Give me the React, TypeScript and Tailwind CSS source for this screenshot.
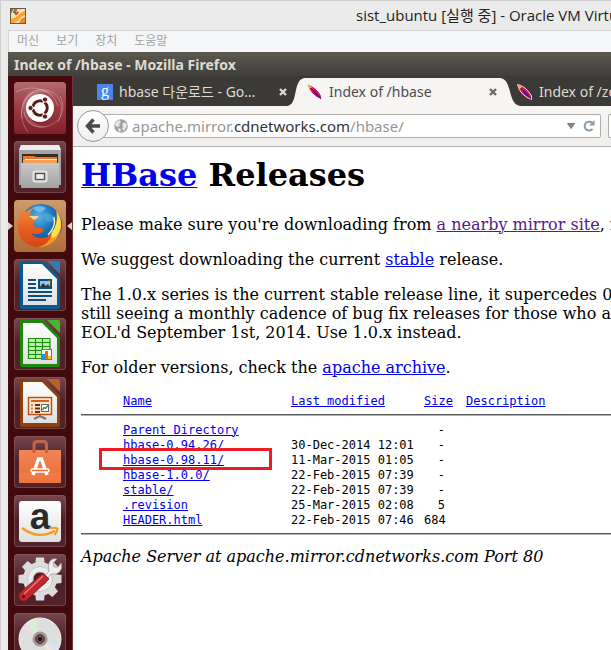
import type { ReactNode } from "react"

const link = "text-[#0000ee] underline decoration-1"

const files = [
  { name: "Parent Directory", date: "", size: "-" },
  { name: "hbase-0.94.26/", date: "30-Dec-2014 12:01", size: "-" },
  { name: "hbase-0.98.11/", date: "11-Mar-2015 01:05", size: "-", marked: true },
  { name: "hbase-1.0.0/", date: "22-Feb-2015 07:39", size: "-" },
  { name: "stable/", date: "22-Feb-2015 07:39", size: "-" },
  { name: ".revision", date: "25-Mar-2015 02:08", size: "5" },
  { name: "HEADER.html", date: "22-Feb-2015 07:46", size: "684" },
]

const VmIcon = () => (
  <svg viewBox="0 0 16 16" className="size-4 shrink-0" aria-hidden="true">
    <rect x="0.5" y="0.5" width="15" height="15" fill="#f6dfb8" stroke="#6e5540" />
    <path d="M1 15V11L6 9L9 5L15 3V7L11 9L8 13L4 15Z" fill="#f6a62b" />
    <path d="M9 15L11 11L15 9V15Z" fill="#f08a1c" />
    <path d="M4 5Q6 9 8 6L9 4L6 3Z" fill="#e8541c" />
    <path d="M1 1H7V4H1Z" fill="#c9c9c9" />
    <path d="M1 2H3M4 2H7M1 4H2M3 4H6" stroke="#2c2c2c" />
    <path d="M7 8L12 3L14 2" stroke="#fff3d8" fill="none" />
  </svg>
)

const Feather = () => (
  <svg viewBox="0 0 16 16" className="size-4 shrink-0" aria-hidden="true">
    <path
      d="M0.5 0.5L4 1.5L8 4L12 8L14.5 12L14.5 15.5L10 13.5L5 9.5L2 5Z"
      fill="#dc1464"
      stroke="#ffffff"
      strokeWidth="0.8"
    />
    <path d="M0.5 0.5L4 1.5L4.5 4L2 4.5Z" fill="#e8b23a" />
    <path d="M5 5L9 8L12.5 12L13 14L8 10.5Z" fill="#4b1a8c" />
    <path d="M4 4L14 15" stroke="#2a1470" strokeWidth="0.8" />
  </svg>
)

const CloseMark = ({ color }: { color: string }) => (
  <svg viewBox="0 0 8 8" className="size-2" aria-hidden="true">
    <path d="M1 1L7 7M7 1L1 7" stroke={color} strokeWidth="2.4" />
  </svg>
)

const UbuntuIcon = () => (
  <>
    <rect width="52" height="52" rx="3" fill="url(#dash)" />
    <g fill="none" stroke="#fff" strokeOpacity="0.28">
      <path d="M8 36C4 16 22 2 38 10C48 16 50 28 44 40" />
      <path d="M2 10C18 2 38 6 44 24" />
      <path d="M14 50C4 38 6 18 20 10" />
      <path d="M10 30C12 46 32 50 44 38C50 32 50 20 46 14" />
    </g>
    <path
      d="M9 24C8 8 30 0 42 16C32 6 16 10 14 24C12 38 24 46 36 44C20 50 8 40 9 24Z"
      fill="#fff"
      fillOpacity="0.16"
    />
    <circle cx="26" cy="27" r="14" fill="#5b1219" opacity="0.5" />
    <circle cx="26" cy="26" r="14" fill="#fff" />
    <circle cx="26" cy="26" r="7.2" fill="none" stroke="#5c1b1b" strokeWidth="3" />
    <path d="M26 26L14 26M26 26L32 16M26 26L32 36" stroke="#fff" strokeWidth="1.6" />
    <circle cx="26" cy="26" r="5.4" fill="#fff" />
    <g fill="#5c1b1b" stroke="#fff" strokeWidth="0.9">
      <circle cx="16.5" cy="26" r="2.6" />
      <circle cx="31" cy="17.5" r="2.6" />
      <circle cx="31" cy="34.5" r="2.6" />
    </g>
  </>
)

const FilesIcon = () => (
  <>
    <path d="M7 4H45L47 9V44H5V9Z" fill="#a6a6a6" />
    <path d="M7 4H45L47 9H5Z" fill="#ececec" />
    <rect x="8" y="13" width="36" height="10" fill="#3b2b28" />
    <path d="M9 15H20L22 16H43V23H9Z" fill="#e8762c" />
    <path d="M9 19H43V23H9Z" fill="#f5a052" />
    <path d="M11 18.5H43" stroke="#fff1dc" />
    <rect x="7" y="22" width="38" height="25" fill="url(#drawer)" />
    <rect x="19" y="30" width="14" height="11" rx="2" fill="#d9d9d9" stroke="#ededed" />
    <rect x="21.5" y="32.5" width="9" height="6" fill="#f1f1f1" stroke="#565656" strokeWidth="1.4" />
  </>
)

const FirefoxIcon = () => (
  <>
    <rect width="52" height="52" rx="3" fill="url(#foxTile)" />
    <circle cx="27" cy="25" r="21" fill="url(#globe)" />
    <path d="M18 8Q25 4 32 8Q28 13 24 12Z" fill="#7cc5ee" opacity="0.8" />
    <path d="M30 14Q38 12 41 20Q36 24 31 20Z" fill="#57addd" opacity="0.6" />
    <path
      d="M42 10C50 20 49 36 38 43C29 49 14 49 8 38C18 42 30 42 37 34C42 28 44 20 42 10Z"
      fill="#f59a1d"
    />
    <path d="M43 12C49 21 48 31 41 37C38 39 36 37 38 32C42 27 44 20 43 12Z" fill="#ffe24a" />
    <path d="M40 17C42 25 38 31 34 35" stroke="#fff8b8" strokeWidth="1.4" fill="none" />
    <path
      d="M6 16Q7 12 10 9L12 12Q15 9 19 8Q16 11 16 15L24 16Q25 19 20 21L19 25Q22 28 27 28Q30 29 29 32Q23 36 17 33Q20 38 28 38Q34 38 38 34Q35 45 24 47C12 47 4 38 4 27Q4 20 6 16Z"
      fill="url(#fox)"
    />
    <path d="M15 16L24 16Q25 18 20 20Z" fill="#f8d2a0" />
  </>
)

const WriterIcon = () => (
  <>
    <path d="M6 4Q6 2 8 2H29L46 19V48Q46 50 44 50H8Q6 50 6 48Z" fill="#075a92" />
    <path d="M33 2H44Q46 2 46 4V15Z" fill="#2f7fb3" />
    <path d="M9 5H28L43 20V46H9Z" fill="url(#paper)" />
    <path
      d="M14 21H22M14 25H22M14 29H22M14 33H38M14 37H38M14 41H32"
      stroke="#0b4f80"
      strokeWidth="2"
    />
    <rect x="25" y="21" width="12" height="8" fill="#8cc7ec" stroke="#0b4f80" strokeWidth="2" />
    <path d="M26 28L29 24L32 27L34 25L36 28Z" fill="#333" />
    <circle cx="35" cy="23" r="1.5" fill="#e0c04a" />
  </>
)

const CalcIcon = () => (
  <>
    <path d="M6 4Q6 2 8 2H29L46 19V47Q46 49 44 49H8Q6 49 6 47Z" fill="#1b8a0d" />
    <path d="M33 2H44Q46 2 46 4V15Z" fill="#46b830" />
    <path d="M9 5H28L43 20V46H9Z" fill="url(#paper)" />
    <rect x="14" y="20" width="22" height="20" fill="#b9f2a4" />
    <path
      d="M14 20.5H36V40.5H14.5V20M14 24.5H36M14 28.5H36M14 32.5H36M14 36.5H36M21.5 20V40M28.5 20V40"
      stroke="#1f8c12"
      strokeWidth="1.2"
      fill="none"
    />
    <rect x="27.5" y="31.5" width="10" height="10" fill="#fff" stroke="#777" />
    <path d="M28 36H31V41H28Z" fill="#1d99e0" />
    <path d="M31 33H34V41H31Z" fill="#ee6a12" />
    <path d="M34 38H37V41H34Z" fill="#f5b92d" />
  </>
)

const ImpressIcon = () => (
  <>
    <path d="M6 4Q6 2 8 2H29L46 19V48Q46 50 44 50H8Q6 50 6 48Z" fill="#8d400f" />
    <path d="M33 2H44Q46 2 46 4V15Z" fill="#b5622d" />
    <path d="M9 5H28L43 20V46H9Z" fill="url(#paper)" />
    <path d="M26 38V39L20 42M26 39L32 42" stroke="#777" strokeWidth="2" fill="none" />
    <rect x="14.5" y="20.5" width="23" height="17" fill="#fbe4d2" stroke="#b94a10" strokeWidth="1.4" />
    <path d="M17 24H35" stroke="#d2601c" strokeWidth="2" />
    <path d="M17 28H19M17 31.5H19M17 35H19" stroke="#e0803e" strokeWidth="2" />
    <path d="M21 28H26M21 31.5H26M21 35H26" stroke="#6f2c08" strokeWidth="2" />
    <rect x="27.5" y="27.5" width="7" height="7" fill="#fff" stroke="#666" />
    <path d="M28.5 33L30 30.5L31.5 31.5L34 28.5" stroke="#29931c" strokeWidth="1.3" fill="none" />
  </>
)

const SoftwareIcon = () => (
  <>
    <path
      d="M20 17V9Q20 5.5 23.5 5.5H29Q32.5 5.5 32.5 9V17"
      stroke="#c46447"
      strokeWidth="3"
      fill="none"
    />
    <path d="M5 14H47V47H5Z" fill="url(#bag)" />
    <path d="M5 37H47V47H5Z" fill="#fff" fillOpacity="0.07" />
    <path d="M20 14V17M32.5 14V17" stroke="#c9603a" strokeWidth="3" />
    <path d="M19 39L24.5 23H27.5L33 39" stroke="#fff" strokeWidth="3.4" fill="none" />
    <rect x="17" y="33" width="18" height="3" rx="1.5" fill="#ef6b33" stroke="#fff" strokeWidth="1.5" />
  </>
)

const AmazonIcon = () => (
  <>
    <rect x="5" y="6" width="42" height="41" rx="3" fill="url(#paper)" />
    <text
      x="26"
      y="34"
      textAnchor="middle"
      fill="#2b2b2b"
      className="font-['Liberation_Sans',sans-serif] text-[37px] font-bold"
    >
      a
    </text>
    <path d="M8 33Q24 45 41 36" stroke="#f79a1c" strokeWidth="2.4" fill="none" />
    <path d="M35 33.5Q41 32 43.5 33.5Q43.5 37 40.5 40" stroke="#f79a1c" strokeWidth="2" fill="none" />
  </>
)

const teeth = [0, 45, 90, 135, 180, 225, 270, 315]

const SettingsIcon = () => (
  <>
    <g fill="#dcdcdc">
      {teeth.map((deg) => (
        <path key={deg} d="M21 12L22 3.5H30L31 12Z" transform={`rotate(${deg} 26 25)`} />
      ))}
      <circle cx="26" cy="25" r="17" />
    </g>
    <circle cx="26" cy="25" r="12.5" fill="#ececec" stroke="#c9c9c9" />
    <circle cx="26" cy="25" r="7" fill="#4a1c22" stroke="#bcbcbc" />
    <path
      d="M28 25L35 17Q33 10 37 6Q39 4 43 5L39 9L40 13L44 13L47 9Q49 16 44 19Q41 21 37 20L31 28Z"
      fill="#efefef"
      stroke="#9a9a9a"
      strokeWidth="0.8"
    />
    <path
      d="M29 19L35 25L14 45Q10 49 6 46Q3 42 6 38.5Z"
      fill="#c0272d"
      stroke="#7d1216"
      strokeWidth="0.8"
    />
    <path d="M29 22L10 40" stroke="#e8777a" strokeWidth="1.5" />
    <circle cx="9.5" cy="42.5" r="1.5" fill="#4f0d10" />
  </>
)

const DiscIcon = () => (
  <>
    <circle cx="26" cy="26" r="21" fill="#dedede" stroke="#f4f4f4" />
    <path d="M26 26L12 11Q17 6 22 5.5Z" fill="#d8efd4" />
    <path d="M26 26L8 15L12 11Z" fill="#f2d9ec" />
    <path d="M26 26L46 33L42 39Z" fill="#d4e6f2" />
    <path d="M26 26L42 39L36 44Z" fill="#f3e3cf" />
    <circle cx="26" cy="26" r="7.5" fill="#a39797" />
    <circle cx="26" cy="26" r="4.5" fill="#6e4a4c" stroke="#54383a" />
    <circle cx="26" cy="26" r="2" fill="#1f0b0c" />
  </>
)

const Gradients = () => (
  <svg className="absolute size-0" aria-hidden="true">
    <defs>
      <linearGradient id="dash" x2="0" y2="1">
        <stop offset="0" stopColor="#b46a6e" />
        <stop offset="0.5" stopColor="#9a3a40" />
        <stop offset="1" stopColor="#85202a" />
      </linearGradient>
      <linearGradient id="drawer" x2="0" y2="1">
        <stop offset="0" stopColor="#c9c9c9" />
        <stop offset="1" stopColor="#a2a2a2" />
      </linearGradient>
      <linearGradient id="foxTile" x2="0" y2="1">
        <stop offset="0" stopColor="#cf9a6c" />
        <stop offset="1" stopColor="#ae6d38" />
      </linearGradient>
      <radialGradient id="globe" cx="0.45" cy="0.3" r="0.7">
        <stop offset="0" stopColor="#5cb5e6" />
        <stop offset="0.5" stopColor="#1c74b8" />
        <stop offset="1" stopColor="#143f86" />
      </radialGradient>
      <linearGradient id="fox" x2="0" y2="1">
        <stop offset="0" stopColor="#f08a35" />
        <stop offset="0.6" stopColor="#e55a1e" />
        <stop offset="1" stopColor="#d1461a" />
      </linearGradient>
      <linearGradient id="paper" x2="0" y2="1">
        <stop offset="0" stopColor="#ffffff" />
        <stop offset="1" stopColor="#dfdfdf" />
      </linearGradient>
      <linearGradient id="bag" x2="0" y2="1">
        <stop offset="0" stopColor="#f0855a" />
        <stop offset="1" stopColor="#ee6a30" />
      </linearGradient>
    </defs>
  </svg>
)

const launchers: { label: string; icon: ReactNode; active?: boolean }[] = [
  { label: "Dash", icon: <UbuntuIcon /> },
  { label: "Files", icon: <FilesIcon /> },
  { label: "Firefox", icon: <FirefoxIcon />, active: true },
  { label: "Writer", icon: <WriterIcon /> },
  { label: "Calc", icon: <CalcIcon /> },
  { label: "Impress", icon: <ImpressIcon /> },
  { label: "Software Center", icon: <SoftwareIcon /> },
  { label: "Amazon", icon: <AmazonIcon /> },
  { label: "System Settings", icon: <SettingsIcon /> },
  { label: "Disc", icon: <DiscIcon /> },
]

const Launcher = () => (
  <nav className="flex w-[65px] shrink-0 flex-col items-center gap-[7px] overflow-hidden border-r border-[#7a3038] bg-[#420a0c] pt-[6px]">
    <Gradients />
    {launchers.map(({ label, icon, active }) => (
      <div key={label} className="relative flex w-full shrink-0 justify-center">
        <button
          aria-label={label}
          className="size-[52px] overflow-hidden rounded-[4px] bg-linear-to-b from-[#76474f] via-[#4f1e26] to-[#53232b] ring-1 ring-[#8a5a60]/60 ring-inset"
        >
          <svg viewBox="0 0 52 52" className="size-full">
            {icon}
          </svg>
        </button>
        {active && (
          <>
            <svg viewBox="0 0 5 8" className="absolute top-[22px] left-0 h-2 w-[5px]" aria-hidden="true">
              <path d="M0 0L5 4L0 8Z" fill="#d9d2d0" />
            </svg>
            <svg viewBox="0 0 5 8" className="absolute top-[22px] right-0 h-2 w-[5px]" aria-hidden="true">
              <path d="M5 0L0 4L5 8Z" fill="#d9d2d0" />
            </svg>
          </>
        )}
      </div>
    ))}
  </nav>
)

const TabBar = () => (
  <div className="flex h-[30px] shrink-0 items-end overflow-hidden bg-[#3b3a36] text-[14px] leading-5 whitespace-nowrap text-[#dfdbd2]">
    <div className="flex h-7 w-[214px] shrink-0 items-center gap-[6px] pl-6">
      <svg viewBox="0 0 16 16" className="size-4 shrink-0" aria-hidden="true">
        <rect width="16" height="16" rx="1" fill="#4a86ee" />
        <text
          x="8"
          y="12"
          textAnchor="middle"
          fill="#fff"
          className="font-['Liberation_Serif',serif] text-[16px]"
        >
          g
        </text>
      </svg>
      <span>hbase 다운로드 - Go…</span>
      <button aria-label="Close tab" className="ml-auto">
        <CloseMark color="#dfdbd2" />
      </button>
    </div>
    <div className="flex h-7 shrink-0 items-stretch text-[#4c4c4c]">
      <svg viewBox="0 0 20 28" className="h-7 w-5" aria-hidden="true">
        <path d="M0 28C12 27 5 1 18 0H20V28Z" fill="#f6f5f4" />
      </svg>
      <div className="flex w-[190px] items-center gap-[6px] bg-[#f6f5f4]">
        <Feather />
        <span>Index of /hbase</span>
        <button aria-label="Close tab" className="ml-auto">
          <CloseMark color="#6a6a68" />
        </button>
      </div>
      <svg viewBox="0 0 24 28" className="h-7 w-6" aria-hidden="true">
        <path d="M24 28C10 27 16 1 3 0H0V28Z" fill="#f6f5f4" />
      </svg>
    </div>
    <div className="-ml-1 flex h-7 shrink-0 items-center gap-[6px]">
      <Feather />
      <span>Index of /zookeeper</span>
    </div>
  </div>
)

const NavBar = () => (
  <div className="flex h-[41px] shrink-0 items-center overflow-hidden border-b border-[#b4b2a8] bg-linear-to-b from-[#f6f5f4] to-[#f0efee] pl-1">
    <button
      aria-label="Back"
      className="z-10 flex size-8 shrink-0 items-center justify-center rounded-full border border-[#8f9aa6] bg-linear-to-b from-white to-[#efefef]"
    >
      <svg viewBox="0 0 16 16" className="size-4" aria-hidden="true">
        <path d="M8.5 1.5L2.5 8L8.5 14.5M3 8H15" stroke="#4a4a4a" strokeWidth="3.4" fill="none" />
      </svg>
    </button>
    <div className="-ml-3 flex h-6 min-w-0 flex-1 items-center gap-1 rounded-[2px] border border-[#b0aea4] bg-white pr-[5px] pl-4 text-[15px] leading-5 whitespace-nowrap text-[#979797]">
      <svg viewBox="0 0 14 14" className="size-[14px] shrink-0" aria-hidden="true">
        <circle cx="7" cy="7" r="6.8" fill="#a0a0a0" />
        <path
          d="M2 3L5 1L7 3L5 5L6 7L3 8L1 6ZM8 5L11 3L13 6L12 9L10 12L8 10L9 8ZM4 10L6 9L7 12L5 13Z"
          fill="#e6e6e6"
        />
      </svg>
      <span className="flex-1">
        apache.mirror.<span className="text-[#333]">cdnetworks.com</span>/hbase/
      </span>
      <button aria-label="History" className="px-1">
        <svg viewBox="0 0 8 6" className="h-[6px] w-2" aria-hidden="true">
          <path d="M0.5 0.5H7.5L4 5.5Z" fill="#8a8a8a" stroke="#777" />
        </svg>
      </button>
      <button aria-label="Reload">
        <svg viewBox="0 0 12 12" className="size-3" aria-hidden="true">
          <path d="M9.5 8.8A4.4 4.4 0 1 1 9 2.8" stroke="#8d9aa8" strokeWidth="2" fill="none" />
          <path d="M11.5 0V5.5H6Z" fill="#8d9aa8" />
        </svg>
      </button>
    </div>
    <div className="ml-[7px] h-6 w-[3px] shrink-0 rounded-l-[2px] border border-r-0 border-[#b0aea4] bg-white" />
  </div>
)

const Listing = () => (
  <table className="mt-[17px] w-full table-fixed border-collapse font-['DejaVu_Sans_Mono',monospace] text-[12px] leading-[15px] whitespace-nowrap">
    <thead>
      <tr className="text-left">
        <th className="w-[210px] p-0 pl-[42px] font-normal">
          <a href="#name" className={link}>Name</a>
        </th>
        <th className="w-[133px] p-0 font-normal">
          <a href="#modified" className={link}>Last modified</a>
        </th>
        <th className="w-[42px] p-0 font-normal">
          <a href="#size" className={link}>Size</a>
        </th>
        <th className="p-0 font-normal">
          <a href="#description" className={link}>Description</a>
        </th>
      </tr>
    </thead>
    <tbody>
      <tr>
        <td colSpan={4} className="p-0">
          <hr className="mt-[5px] mb-[7px] h-[2px] border-t border-b border-t-[#5a5a5a] border-b-[#b0b0b0]" />
        </td>
      </tr>
      {files.map((f) => (
        <tr key={f.name}>
          <td className="relative p-0 pl-[42px]">
            <a href="#file" className={link}>{f.name}</a>
            {f.marked && (
              <div className="absolute -top-[5px] left-[18px] h-[22px] w-[173px] border-3 border-[#ed1c24]" />
            )}
          </td>
          <td className="p-0">{f.date}</td>
          <td className="p-0 pr-[21px] text-right">{f.size}</td>
          <td className="p-0" />
        </tr>
      ))}
    </tbody>
  </table>
)

const HbasePage = () => (
  <main className="min-w-0 flex-1 overflow-hidden bg-white pt-[9px] pl-2 font-['DejaVu_Serif',serif] text-[16px] leading-[19px] whitespace-nowrap text-black">
    <h1 className="mb-[21px] text-[32px] leading-[38px] font-bold">
      <a href="#hbase" className={link}>HBase</a> Releases
    </h1>
    <p className="mb-4">
      Please make sure you're downloading from{" "}
      <a href="#mirror" className="text-[#551a8b] underline decoration-1">a nearby mirror site</a>, not
    </p>
    <p className="mb-4">
      We suggest downloading the current <a href="#stable" className={link}>stable</a> release.
    </p>
    <p className="mb-4">
      The 1.0.x series is the current stable release line, it supercedes 0.98
      <br />
      still seeing a monthly cadence of bug fix releases for those who are
      <br />
      EOL'd September 1st, 2014. Use 1.0.x instead.
    </p>
    <p>
      For older versions, check the <a href="#archive" className={link}>apache archive</a>.
    </p>
    <Listing />
    <hr className="mt-[5px] mb-3 h-[2px] border-t border-b border-t-[#5a5a5a] border-b-[#b0b0b0]" />
    <address className="italic">Apache Server at apache.mirror.cdnetworks.com Port 80</address>
  </main>
)

const App = () => (
  <div className="flex h-screen flex-col overflow-hidden border-t border-l border-[#cfcfcf] bg-[#ebebeb] pl-[7px] font-['Noto_Sans','Noto_Sans_CJK_KR',sans-serif]">
    <header className="flex h-[29px] shrink-0 items-center overflow-hidden pl-[2px] font-['Open_Sans','Noto_Sans_CJK_KR',sans-serif] text-[15px] whitespace-nowrap text-[#222]">
      <VmIcon />
      <h2 className="ml-[330px]">sist_ubuntu [실행 중] - Oracle VM VirtualBox</h2>
    </header>
    <div className="flex h-[22px] shrink-0 items-center gap-[17px] border-t border-l border-[#d5d5d5] bg-[#f5f6f7] pb-[2px] pl-2 text-[12px] text-[#a3a3a3]">
      <button>머신</button>
      <button>보기</button>
      <button>장치</button>
      <button>도움말</button>
    </div>
    <div className="flex h-6 shrink-0 items-center bg-linear-to-b from-[#5b5950] to-[#403f3b] pl-[6px] text-[14px] font-bold whitespace-nowrap text-[#dfdbd2]">
      Index of /hbase - Mozilla Firefox
    </div>
    <div className="flex min-h-0 flex-1">
      <Launcher />
      <div className="flex min-w-0 flex-1 flex-col">
        <TabBar />
        <NavBar />
        <HbasePage />
      </div>
    </div>
  </div>
)

export default App
